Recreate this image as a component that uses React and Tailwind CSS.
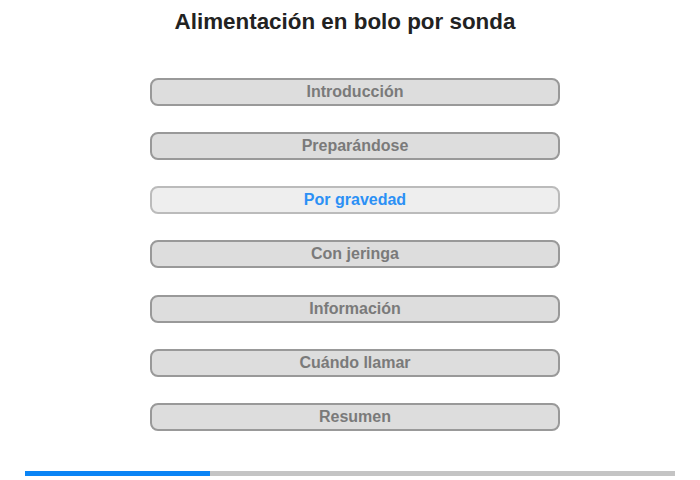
import { useState } from 'react';

const sections = [
  'Introducción',
  'Preparándose',
  'Por gravedad',
  'Con jeringa',
  'Información',
  'Cuándo llamar',
  'Resumen',
];

export default function App() {
  const [active, setActive] = useState(2);

  return (
    <div className="w-[700px] h-[480px] bg-white font-['Liberation_Sans',Arial,sans-serif] relative">
      {/* Title */}
      <h1 className="pt-[9px] pr-[10px] text-center text-[22.4px] leading-[26px] font-bold text-[#222]">
        Alimentación en bolo por sonda
      </h1>

      {/* Section buttons */}
      <div className="flex flex-col pl-[150px] mt-[43px]">
        {sections.map((label, i) => (
          <button
            key={label}
            onClick={() => setActive(i)}
            className={
              (i === 0 ? '' : i === 4 ? 'mt-[27px] ' : 'mt-[26px] ') +
              (i === active
                ? 'w-[410px] h-[28px] rounded-[8px] border-2 border-[#bbb] bg-[#eee] text-[16px] font-bold text-[#2b90f5] leading-[24px]'
                : 'w-[410px] h-[28px] rounded-[8px] border-2 border-[#999] bg-[#ddd] text-[16px] font-bold text-[#7a7a7a] leading-[24px]')
            }
          >
            {label}
          </button>
        ))}
      </div>

      {/* Progress */}
      <div className="absolute left-[25px] top-[471px] w-[650px] h-[5px] bg-[#c4c4c4]">
        <div className="h-full w-[185px] bg-[#0a84f5]" />
      </div>
    </div>
  );
}
